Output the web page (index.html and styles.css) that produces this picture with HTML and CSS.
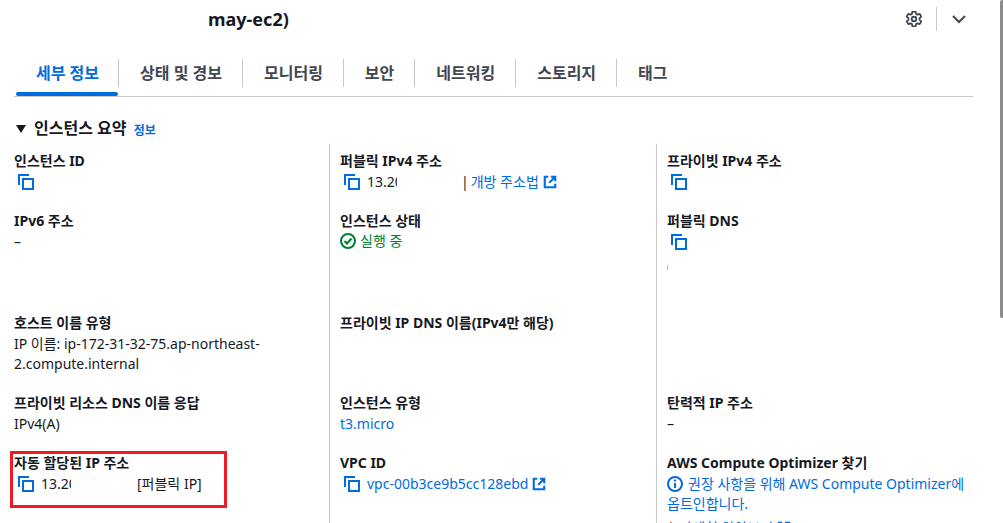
FILE: index.html
```html
<!DOCTYPE html>
<html lang="ko">
<head>
    <meta charset="UTF-8">
    <title>인스턴스 세부 정보</title>
    <link rel="stylesheet" href="styles.css">
</head>
<body>
    <svg class="icon-defs" width="0" height="0">
        <symbol id="copy" viewBox="0 0 16 16">
            <path d="M1 11V1h10" fill="none" stroke="currentColor" stroke-width="2"/>
            <path d="M5 5h10v10H5z" fill="none" stroke="currentColor" stroke-width="2"/>
        </symbol>
        <symbol id="external" viewBox="0 0 16 16">
            <path d="M6 2H2v12h12v-4" fill="none" stroke="currentColor" stroke-width="2.4"/>
            <path d="M9 2h5v5M14 2L7 9" fill="none" stroke="currentColor" stroke-width="2.4"/>
        </symbol>
    </svg>

    <header class="page-head">
        <h1 class="title">may-ec2)</h1>
        <div class="head-actions">
            <svg class="gear" viewBox="1 0.5 14 14">
                <path d="M6.6 1h2.8l.4 2 1.3.7 1.9-.7 1.4 2.4-1.5 1.3v1.6l1.5 1.3-1.4 2.4-1.9-.7-1.3.7-.4 2H6.6l-.4-2-1.3-.7-1.9.7L1.6 9.6l1.5-1.3V6.7L1.6 5.4 3 3l1.9.7 1.3-.7z" fill="none" stroke="currentColor" stroke-width="1.6" stroke-linejoin="round"/>
                <circle cx="8" cy="7.5" r="2" fill="none" stroke="currentColor" stroke-width="1.6"/>
            </svg>
            <span class="head-sep"></span>
            <svg class="chevron" viewBox="0 0 16 16">
                <path d="M2 5l6 6 6-6" fill="none" stroke="currentColor" stroke-width="2"/>
            </svg>
        </div>
    </header>

    <nav class="tabs">
        <a class="tab active">세부 정보</a>
        <a class="tab">상태 및 경보</a>
        <a class="tab">모니터링</a>
        <a class="tab">보안</a>
        <a class="tab">네트워킹</a>
        <a class="tab">스토리지</a>
        <a class="tab">태그</a>
    </nav>

    <h2 class="section-title"><span class="caret"></span>인스턴스 요약 <a class="info">정보</a></h2>

    <div class="summary">
        <div class="field row-a">
            <div class="label">인스턴스 ID</div>
            <div class="value"><svg class="copy"><use href="#copy"/></svg></div>
        </div>
        <div class="field row-a">
            <div class="label">퍼블릭 IPv4 주소</div>
            <div class="value"><svg class="copy"><use href="#copy"/></svg><span class="masked ipv4">13.20</span><span class="pipe">|</span> <a class="link">개방 주소법</a><svg class="ext"><use href="#external"/></svg></div>
        </div>
        <div class="field row-a">
            <div class="label">프라이빗 IPv4 주소</div>
            <div class="value"><svg class="copy"><use href="#copy"/></svg></div>
        </div>

        <div class="field row-b">
            <div class="label">IPv6 주소</div>
            <div class="value">–</div>
        </div>
        <div class="field row-b">
            <div class="label">인스턴스 상태</div>
            <div class="value status">
                <svg class="status-icon" viewBox="0 0 16 16">
                    <circle cx="8" cy="8" r="7" fill="none" stroke="currentColor" stroke-width="2"/>
                    <path d="M4.5 8l2.5 2.5 4.5-5" fill="none" stroke="currentColor" stroke-width="2"/>
                </svg>실행 중
            </div>
        </div>
        <div class="field row-b">
            <div class="label">퍼블릭 DNS</div>
            <div class="value"><svg class="copy"><use href="#copy"/></svg></div>
            <span class="dns-mark"></span>
        </div>

        <div class="field row-c">
            <div class="label">호스트 이름 유형</div>
            <div class="value">IP 이름: ip-172-31-32-75.ap-northeast-2.compute.internal</div>
        </div>
        <div class="field row-c">
            <div class="label">프라이빗 IP DNS 이름(IPv4만 해당)</div>
        </div>
        <div class="field row-c"></div>

        <div class="field row-d">
            <div class="label">프라이빗 리소스 DNS 이름 응답</div>
            <div class="value">IPv4(A)</div>
        </div>
        <div class="field row-d">
            <div class="label">인스턴스 유형</div>
            <div class="value"><a class="link">t3.micro</a></div>
        </div>
        <div class="field row-d">
            <div class="label">탄력적 IP 주소</div>
            <div class="value">–</div>
        </div>

        <div class="field row-e">
            <div class="label">자동 할당된 IP 주소</div>
            <div class="value"><svg class="copy"><use href="#copy"/></svg><span class="masked auto-ip">13.20</span>[퍼블릭 IP]</div>
            <span class="red-box"></span>
        </div>
        <div class="field row-e">
            <div class="label">VPC ID</div>
            <div class="value"><svg class="copy"><use href="#copy"/></svg><a class="link">vpc-00b3ce9b5cc128ebd</a><svg class="ext"><use href="#external"/></svg></div>
        </div>
        <div class="field row-e">
            <div class="label">AWS Compute Optimizer 찾기</div>
            <div class="value link">
                <svg class="info-icon" viewBox="0 0 16 16">
                    <circle cx="8" cy="8" r="7" fill="none" stroke="currentColor" stroke-width="2"/>
                    <path d="M8 7v5M8 3.6v2" fill="none" stroke="currentColor" stroke-width="2"/>
                </svg>권장 사항을 위해 AWS Compute Optimizer에 옵트인합니다.
            </div>
            <div class="value learn"><span class="pipe-dark">|</span> <a class="link">자세히 알아보기</a><svg class="ext"><use href="#external"/></svg></div>
        </div>
    </div>

    <div class="scrollbar"></div>
</body>
</html>
```

FILE: styles.css
```css
html, body {
    height: 523px;
    overflow: hidden;
}
body {
    margin: 0;
    font-family: "Noto Sans", "Noto Sans CJK KR", sans-serif;
    font-size: 14px;
    line-height: 20px;
    color: #16191f;
    background: #fff;
}
a {
    text-decoration: none;
}
svg {
    flex: none;
}
.icon-defs {
    position: absolute;
}

/* header */
.page-head {
    display: flex;
    justify-content: space-between;
    align-items: center;
    height: 38px;
    padding-left: 208px;
}
.title {
    margin: 0;
    font-size: 18px;
    line-height: 38px;
    font-weight: 700;
}
.head-actions {
    display: flex;
    align-items: center;
    margin-right: 36px;
    color: #414750;
}
.gear {
    width: 16px;
    height: 16px;
}
.head-sep {
    width: 1px;
    height: 24px;
    margin: 0 14px 0 14px;
    background: #c6c6cd;
}
.chevron {
    width: 16px;
    height: 16px;
}

/* tabs */
.tabs {
    display: flex;
    align-items: flex-start;
    margin: 21px 30px 0 14px;
    height: 37px;
    border-bottom: 1px solid #c6c6cd;
}
.tab {
    position: relative;
    height: 28px;
    padding: 0 20px 0 21px;
    border-left: 1px solid #c6c6cd;
    font-size: 16px;
    line-height: 28px;
    font-weight: 700;
    color: #424650;
    white-space: nowrap;
}
.tab.active {
    border-left: 0;
    padding: 0 19px 0 22px;
    color: #006ce0;
}
.tab.active::after {
    content: "";
    position: absolute;
    left: 2px;
    right: 0;
    top: 33px;
    height: 4px;
    border-radius: 2px;
    background: #006ce0;
}

/* section */
.section-title {
    margin: 21px 0 0 16px;
    font-size: 16px;
    line-height: 20px;
    font-weight: 700;
}
.caret {
    display: inline-block;
    width: 0;
    height: 0;
    margin-right: 8px;
    border-left: 5px solid transparent;
    border-right: 5px solid transparent;
    border-top: 8px solid #16191f;
    vertical-align: 1px;
}
.info {
    margin-left: 3px;
    font-size: 12px;
    color: #006ce0;
    vertical-align: -1px;
}

/* summary grid */
.summary {
    display: grid;
    grid-template-columns: 329px 327px 1fr;
    margin-top: 3px;
}
.field {
    position: relative;
    box-sizing: border-box;
    padding: 7px 14px 0 10px;
    border-left: 1px solid #c6c6cd;
    word-break: keep-all;
}
.field:nth-child(3n+1) {
    padding-left: 14px;
    border-left: 0;
}
.row-a {
    height: 60px;
}
.row-b {
    height: 102px;
}
.row-c {
    height: 80px;
}
.row-d {
    height: 60px;
}
.row-e {
    height: 100px;
}
.label {
    font-weight: 700;
}
.value {
    margin-top: 1px;
}
.value:has(.copy) {
    display: flex;
    align-items: center;
    height: 20px;
}
.copy {
    width: 16px;
    height: 16px;
    margin: 0 7px 0 4px;
    color: #006ce0;
}
.ext {
    width: 14px;
    height: 14px;
    margin-left: 4px;
    color: #006ce0;
    vertical-align: -2px;
}
.link {
    color: #006ce0;
}
.masked {
    display: inline-block;
    overflow: hidden;
    white-space: nowrap;
    width: 30px;
}
.ipv4 {
    margin-right: 64px;
}
.auto-ip {
    margin-right: 66px;
}
.pipe {
    margin-right: 2px;
}
.pipe-dark {
    margin-right: 1px;
}
.status {
    margin-top: 0;
    color: #00802f;
}
.status-icon {
    width: 16px;
    height: 16px;
    margin-right: 4px;
    vertical-align: -3px;
}
.info-icon {
    width: 16px;
    height: 16px;
    margin-right: 5px;
    vertical-align: -3px;
}
.learn {
    margin-top: 4px;
}
.dns-mark {
    position: absolute;
    left: 10px;
    top: 61px;
    width: 1px;
    height: 5px;
    background: #f2b26b;
}
.red-box {
    position: absolute;
    left: 10px;
    top: 5px;
    width: 211px;
    height: 51px;
    border: 3px solid #ed1c24;
}
.scrollbar {
    position: absolute;
    top: 0;
    right: 0;
    width: 3px;
    height: 318px;
    border-radius: 2px 0 0 2px;
    background: #8b8b8b;
}
```
